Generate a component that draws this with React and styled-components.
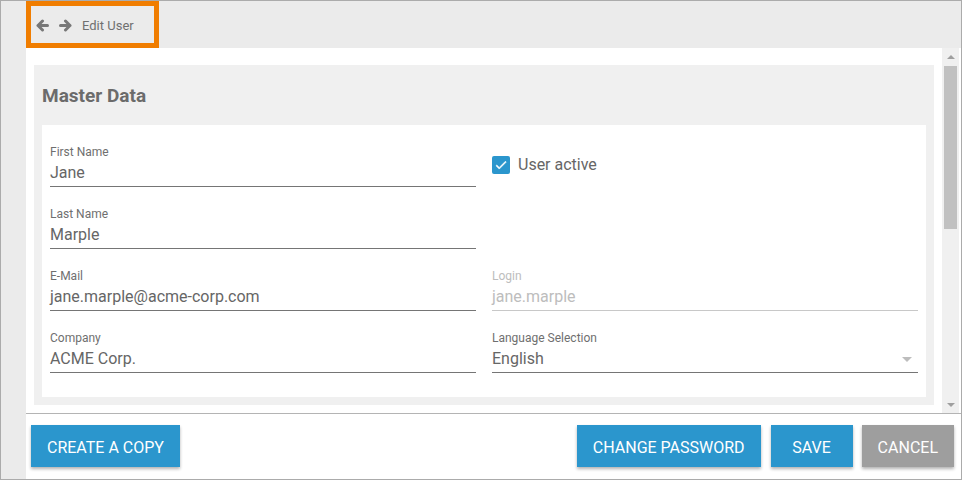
import React from "react";
import styled, { createGlobalStyle } from "styled-components";

/* ================= GLOBAL ================= */

const Global = createGlobalStyle`
  html, body {
    margin: 0;
    padding: 0;
    background: #ffffff;
  }
  * { box-sizing: border-box; }
  body {
    font-family: Roboto, "Liberation Sans", Arial, sans-serif;
  }
`;

/* ================= FRAME ================= */

const Frame = styled.div`
  width: 962px;
  height: 480px;
  border: 1px solid #ababab;
  background: #ebebeb;
  display: flex;
  overflow: hidden;
`;

const Gutter = styled.div`
  width: 25px;
  flex-shrink: 0;
  background: #ebebeb;
`;

const Main = styled.div`
  flex: 1;
  display: flex;
  flex-direction: column;
  min-width: 0;
`;

/* ================= HEADER ================= */

const Header = styled.div`
  height: 47px;
  background: #ebebeb;
  display: flex;
`;

const Crumb = styled.div`
  width: 133px;
  height: 100%;
  border: 5px solid #f07d00;
  display: flex;
  align-items: center;
  padding: 2px 0 0 5px;
`;

const NavIcon = styled.svg`
  width: 13px;
  height: 13px;
  margin-right: 10px;
  margin-top: -1px;
  fill: none;
  stroke: #777777;
  stroke-width: 3;
  stroke-linecap: round;
  stroke-linejoin: round;
`;

const CrumbText = styled.span`
  font-size: 13px;
  color: #707070;
`;

/* ================= BODY ================= */

const Body = styled.div`
  flex: 1;
  background: #ffffff;
  display: flex;
  flex-direction: column;
`;

const ScrollArea = styled.div`
  height: 366px;
  display: flex;
  border-bottom: 1px solid #b4b4b4;
`;

const ScrollContent = styled.div`
  flex: 1;
  overflow: hidden;
  padding: 17px 8px 0 8px;
`;

const Scrollbar = styled.div`
  width: 17px;
  margin-right: 2px;
  background: #f0f0f0;
  display: flex;
  flex-direction: column;
`;

const ArrowCell = styled.div`
  height: 17px;
  display: flex;
  align-items: center;
  justify-content: center;
  &::before {
    content: "";
    width: 0;
    height: 0;
    border-left: 4px solid transparent;
    border-right: 4px solid transparent;
    ${(p) =>
      p.$down
        ? "border-top: 4px solid #9f9f9f;"
        : "border-bottom: 4px solid #9f9f9f;"}
  }
`;

const Track = styled.div`
  flex: 1;
  padding: 1px 2px;
`;

const Thumb = styled.div`
  height: 163px;
  background: #c1c1c1;
`;

/* ================= CARD ================= */

const Card = styled.div`
  background: #f0f0f0;
  padding: 19px 8px 8px 8px;
`;

const CardTitle = styled.h2`
  margin: 0 0 17px 0;
  font-size: 19px;
  line-height: 24px;
  font-weight: 700;
  color: #6b6b6b;
`;

const Panel = styled.div`
  background: #ffffff;
  padding: 20px 8px 24px 8px;
  display: grid;
  grid-template-columns: 1fr 1fr;
  column-gap: 16px;
  row-gap: 20px;
`;

const Field = styled.div`
  display: flex;
  flex-direction: column;
`;

const Label = styled.label`
  font-size: 12px;
  line-height: 14px;
  margin-bottom: 3px;
  color: ${(p) => (p.$disabled ? "#bdbdbd" : "#6f6f6f")};
`;

const Value = styled.div`
  font-size: 16px;
  line-height: 20px;
  padding: 1px 0 3px 0;
  color: ${(p) => (p.$disabled ? "#bdbdbd" : "#666666")};
  border-bottom: 1px solid ${(p) => (p.$disabled ? "#c8c8c8" : "#757575")};
  display: flex;
  justify-content: space-between;
  align-items: center;
`;

const Caret = styled.span`
  width: 0;
  height: 0;
  margin-right: 6px;
  border-left: 5px solid transparent;
  border-right: 5px solid transparent;
  border-top: 5px solid #bdbdbd;
`;

const CheckRow = styled.div`
  display: flex;
  align-items: center;
  padding-top: 10px;
  align-self: start;
`;

const Box = styled.span`
  width: 18px;
  height: 18px;
  border-radius: 2px;
  background: #2b96cd;
  display: flex;
  align-items: center;
  justify-content: center;
  margin-right: 8px;
`;

const CheckText = styled.span`
  font-size: 16px;
  line-height: 18px;
  padding-top: 1px;
  color: #666666;
`;

/* ================= FOOTER ================= */

const Footer = styled.div`
  flex: 1;
  display: flex;
  justify-content: space-between;
  align-items: flex-start;
  padding: 11px 7px 0 5px;
`;

const Group = styled.div`
  display: flex;
  gap: 9px;
`;

const Button = styled.button`
  height: 42px;
  min-width: 82px;
  padding: 2px 16px 0 16px;
  border: none;
  border-radius: 0;
  font-family: Roboto, "Liberation Sans", Arial, sans-serif;
  font-size: 16px;
  text-transform: uppercase;
  color: #ffffff;
  background: ${(p) => (p.$muted ? "#9e9e9e" : "#2b96cd")};
  box-shadow: 0 2px 3px rgba(0, 0, 0, 0.3);
  margin-left: ${(p) => (p.$wide ? "1px" : "0")};
  cursor: pointer;
`;

/* ================= COMPONENT ================= */

const fields = [
  { label: "First Name", value: "Jane" },
  { check: true },
  { label: "Last Name", value: "Marple" },
  { empty: true },
  { label: "E-Mail", value: "jane.marple@acme-corp.com" },
  { label: "Login", value: "jane.marple", disabled: true },
  { label: "Company", value: "ACME Corp." },
  { label: "Language Selection", value: "English", select: true },
];

const App = () => {
  return (
    <>
      <Global />
      <Frame>
        <Gutter />
        <Main>
          <Header>
            <Crumb>
              <NavIcon viewBox="0 0 13 13">
                <path d="M11.5 6.5H2M6.5 2L2 6.5 6.5 11" />
              </NavIcon>
              <NavIcon viewBox="0 0 13 13">
                <path d="M1.5 6.5H11M6.5 2L11 6.5 6.5 11" />
              </NavIcon>
              <CrumbText>Edit User</CrumbText>
            </Crumb>
          </Header>

          <Body>
            <ScrollArea>
              <ScrollContent>
                <Card>
                  <CardTitle>Master Data</CardTitle>
                  <Panel>
                    {fields.map((f, i) => {
                      if (f.check)
                        return (
                          <CheckRow key={i}>
                            <Box>
                              <svg width="14" height="14" viewBox="0 0 24 24">
                                <path
                                  d="M9 16.17L4.83 12l-1.42 1.41L9 19 21 7l-1.41-1.41z"
                                  fill="#ffffff"
                                  stroke="#ffffff"
                                  strokeWidth="1"
                                />
                              </svg>
                            </Box>
                            <CheckText>User active</CheckText>
                          </CheckRow>
                        );
                      if (f.empty) return <div key={i} />;
                      return (
                        <Field key={i}>
                          <Label $disabled={f.disabled}>{f.label}</Label>
                          <Value $disabled={f.disabled}>
                            <span>{f.value}</span>
                            {f.select && <Caret />}
                          </Value>
                        </Field>
                      );
                    })}
                  </Panel>
                </Card>
              </ScrollContent>
              <Scrollbar>
                <ArrowCell />
                <Track>
                  <Thumb />
                </Track>
                <ArrowCell $down />
              </Scrollbar>
            </ScrollArea>

            <Footer>
              <Button>Create a copy</Button>
              <Group>
                <Button>Change password</Button>
                <Button $wide>Save</Button>
                <Button $muted>Cancel</Button>
              </Group>
            </Footer>
          </Body>
        </Main>
      </Frame>
    </>
  );
};

export default App;
